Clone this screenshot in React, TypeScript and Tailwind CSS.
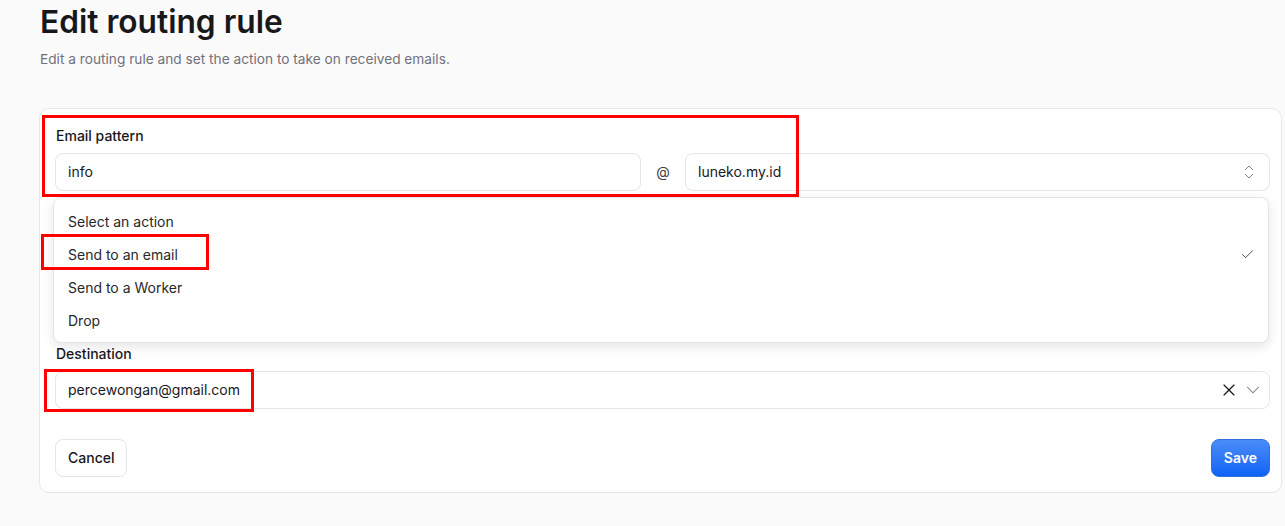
import { Check, ChevronDown, ChevronsUpDown, X } from 'lucide-react'

const actions = ['Select an action', 'Send to an email', 'Send to a Worker', 'Drop']

export default function App() {
  return (
    <div className="relative h-[526px] w-[1285px] overflow-hidden bg-[#fafafa] font-['Inter',sans-serif] text-[#18181b]">
      <div className="pl-[39px]">
        <h1 className="pt-[4px] pl-[1px] text-[31.7px] leading-[36px] font-semibold">Edit routing rule</h1>
        <p className="mt-[9px] pl-[1px] text-[13.7px] leading-5 text-[#71717a]">
          Edit a routing rule and set the action to take on received emails.
        </p>

        {/* Card */}
        <div className="relative mt-[39px] w-[1243px] rounded-[10px] border border-[#e7e7e7] bg-white pt-[17px] pr-[11px] pb-[15px] pl-[15px]">
          <div className="flex flex-col gap-[20px]">
            {/* Email pattern */}
            <div>
              <label className="block pl-[1px] text-sm leading-5 font-medium">Email pattern</label>
              <div className="mt-[7px] flex items-center">
                <div className="flex h-[38px] flex-1 items-center rounded-lg border border-[#e5e5e5] bg-white px-3 text-sm">
                  info
                </div>
                <span className="w-[44px] text-center text-sm text-[#3f3f46]">@</span>
                <div className="flex h-[38px] flex-1 items-center justify-between rounded-lg border border-[#e5e5e5] bg-white pr-[11px] pl-3 text-sm">
                  <span>luneko.my.id</span>
                  <ChevronsUpDown size={18} strokeWidth={1.2} className="text-[#71717a]" />
                </div>
              </div>
            </div>

            {/* Action field, covered by the open menu */}
            <div className="invisible h-[113px]">
              <label className="block text-sm leading-5 font-medium">Action</label>
              <div className="mt-[7px] flex h-[38px] items-center rounded-lg border border-[#e5e5e5] px-3 text-sm">
                Send to an email
              </div>
            </div>

            {/* Destination */}
            <div>
              <label className="block pl-[1px] text-sm leading-5 font-medium">Destination</label>
              <div className="mt-[7px] flex h-[38px] items-center justify-between rounded-lg border border-[#e5e5e5] bg-white pr-[5px] pl-3 text-sm">
                <span>percewongan@gmail.com</span>
                <div className="flex items-center gap-[3px]">
                  <X size={20} strokeWidth={1.4} className="text-[#18181b]" />
                  <ChevronDown size={22} strokeWidth={1.1} className="text-[#71717a]" />
                </div>
              </div>
            </div>
          </div>

          <div className="mt-[30px] flex items-center justify-between">
            <button className="h-[38px] rounded-lg border border-[#e5e5e5] bg-white px-3 text-sm font-medium">
              Cancel
            </button>
            <button className="h-[38px] rounded-lg border border-[#2f6fe0] bg-gradient-to-b from-[#4a8cf7] to-[#0b63f6] px-3 text-sm font-semibold text-white">
              Save
            </button>
          </div>

          {/* Open action menu */}
          <div className="absolute top-[88px] left-[13px] w-[1216px] rounded-lg border border-[#e5e5e5] bg-white pt-[7px] pb-[5px] shadow-[0_4px_12px_rgba(0,0,0,0.1)]">
            {actions.map((a, i) => (
              <div key={a} className="flex h-[33px] items-center justify-between pr-[13px] pl-[14px] text-sm text-[#27272a]">
                <span>{a}</span>
                {i === 1 && <Check size={15} strokeWidth={1.3} className="text-[#27272a]" />}
              </div>
            ))}
          </div>
        </div>
      </div>

      {/* Annotation boxes */}
      <div className="pointer-events-none absolute top-[115px] left-[42px] h-[82px] w-[757px] border-[3px] border-[#ff0000]" />
      <div className="pointer-events-none absolute top-[234px] left-[41px] h-[36px] w-[168px] border-[3px] border-[#ff0000]" />
      <div className="pointer-events-none absolute top-[369px] left-[44px] h-[43px] w-[210px] border-[3px] border-[#ff0000]" />
    </div>
  )
}
